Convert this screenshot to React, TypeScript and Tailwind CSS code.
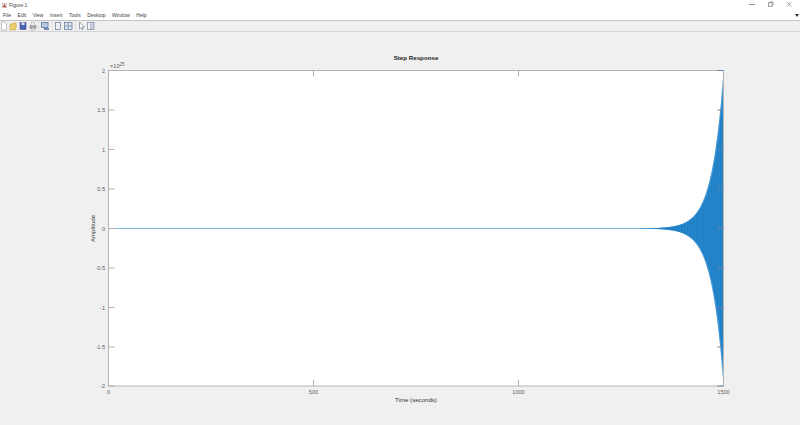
import React from "react";

const font = { fontFamily: '"Liberation Sans", Arial, sans-serif' };
const L = 108.5, R = 723.5, T = 70.5, B = 386, C = 228.5;
const yTicks: [string, number][] = [["2", 70.5], ["1.5", 110], ["1", 149.5], ["0.5", 189], ["0", 228.5], ["-0.5", 268], ["-1", 307.5], ["-1.5", 347], ["-2", 386]];
const xTicks: [string, number][] = [["0", 108.5], ["500", 313.5], ["1000", 518.5], ["1500", 723.5]];
const amp = (x: number) => 157.5 * Math.exp((x - R) * 0.085);

function envelope(k: number) {
  const top: string[] = [];
  const bot: string[] = [];
  for (let x = 640; x <= R; x += 0.5) {
    top.push(`${x},${(C - amp(x) * k).toFixed(2)}`);
    bot.unshift(`${x},${(C + amp(x) * k).toFixed(2)}`);
  }
  return [...top, ...bot].join(" ");
}

function Chart() {
  const streaks: number[] = [];
  for (let x = 670; x <= R; x += 1.5) streaks.push(x);
  return (
    <svg width="800" height="393" viewBox="0 32 800 393" className="block" style={font}>
      <rect x={L} y={T} width={R - L} height={B - T} fill="#ffffff" />
      <line x1={L} x2={660} y1={C} y2={C} stroke="#7fb6de" strokeWidth="1" />
      <polygon points={envelope(1)} fill="#4a9ad6" />
      <polygon points={envelope(0.9)} fill="#2383c9" />
      {streaks.map((x, i) => (
        <line key={x} x1={x} x2={x} y1={C - amp(x) * 0.9} y2={C + amp(x) * 0.9} stroke={i % 2 ? "#3d93d0" : "#1673ba"} strokeWidth="0.6" opacity="0.35" />
      ))}
      <rect x={L} y={T} width={R - L} height={B - T} fill="none" stroke="#b4b4b4" strokeWidth="1" />
      {yTicks.map(([t, y]) => (
        <g key={t}>
          <line x1={L} x2={L + 6} y1={y} y2={y} stroke="#b0b0b0" />
          <line x1={R - 6} x2={R} y1={y} y2={y} stroke="#5f86a6" />
          <text x={L - 3.5} y={y + 2} fontSize="5.6" fill="#5f5f5f" textAnchor="end">{t}</text>
        </g>
      ))}
      {xTicks.map(([t, x]) => (
        <g key={t}>
          <line x1={x} x2={x} y1={B} y2={B - 6} stroke="#b0b0b0" />
          <line x1={x} x2={x} y1={T} y2={T + 6} stroke="#b0b0b0" />
          <text x={x} y={393.5} fontSize="5.6" fill="#5f5f5f" textAnchor="middle">{t}</text>
        </g>
      ))}
      <text x={110} y={67.500} fontSize="5.6" fill="#5f5f5f">×10</text>
      <text x={119.500} y={65.500} fontSize="4.500" fill="#5f5f5f">25</text>
      <text x={416} y={60} fontSize="6.2" fontWeight="700" fill="#222222" textAnchor="middle">Step Response</text>
      <text x={416} y={401.5} fontSize="6.1" fill="#333333" textAnchor="middle">Time (seconds)</text>
      <text transform="translate(95 228.5) rotate(-90)" fontSize="6.1" fill="#333333" textAnchor="middle">Amplitude</text>
    </svg>
  );
}

function ToolIcons() {
  return (
    <svg width="100" height="10" viewBox="0 0 100 10" className="block">
      <path d="M1.500 1h3l2 2v6h-5z" fill="#fff" stroke="#9a9a9a" strokeWidth="0.6" />
      <path d="M10 3h2l1-1h3v2h.5l-1 5H10z" fill="#ebcf70" stroke="#b8983c" strokeWidth="0.5" />
      <rect x="20" y="1.500" width="6" height="7" fill="#4a62ae" stroke="#2f3f80" strokeWidth="0.5" />
      <rect x="21.500" y="1.500" width="3" height="2.500" fill="#dfe5f2" />
      <path d="M30 4.500h6v3h-6z" fill="#ababab" stroke="#7d7d7d" strokeWidth="0.5" />
      <rect x="31.500" y="1.500" width="3" height="3" fill="#f1f1f1" stroke="#999" strokeWidth="0.4" />
      <rect x="31.500" y="7" width="3" height="2.200" fill="#dcdcdc" stroke="#999" strokeWidth="0.4" />
      <path d="M38.500 0v10" stroke="#d8d8d8" strokeWidth="0.6" />
      <rect x="41.500" y="1.500" width="6.500" height="5" fill="#b9cbe3" stroke="#4a6a9c" strokeWidth="0.7" />
      <path d="M44 7h5v2h-5z" fill="#6f8cb3" />
      <path d="M52.500 0v10" stroke="#d8d8d8" strokeWidth="0.6" />
      <rect x="55.500" y="1.500" width="5" height="7" fill="#eef1f6" stroke="#66789a" strokeWidth="0.7" />
      <rect x="64.500" y="1.500" width="7.500" height="7" fill="#dde5f0" stroke="#5c7194" strokeWidth="0.7" />
      <path d="M65 5h7M68.300 2v6.500" stroke="#5c7194" strokeWidth="0.6" />
      <path d="M75.500 0v10" stroke="#d8d8d8" strokeWidth="0.6" />
      <path d="M79.500 1v7l1.700-1.500 1 2.300 1-.5-1-2.200h2.300z" fill="#fff" stroke="#5c7190" strokeWidth="0.6" />
      <rect x="87.500" y="1.500" width="6.500" height="7" fill="#cfd6e0" stroke="#7a8799" strokeWidth="0.7" />
      <rect x="87.500" y="1.500" width="3" height="7" fill="#f4f6f9" stroke="#7a8799" strokeWidth="0.5" />
    </svg>
  );
}

export default function App() {
  const menus = ["File", "Edit", "View", "Insert", "Tools", "Desktop", "Window", "Help"];
  return (
    <div className="w-[800px] h-[425px] overflow-hidden bg-[#f0f0f0] flex flex-col" style={font}>
      <div className="h-[10px] bg-white flex items-center justify-between pl-[2px]">
        <div className="flex items-center gap-[2px] pt-[1px]">
          <svg width="5" height="5" viewBox="0 0 6 6">
            <rect width="6" height="6" fill="#e6e6e6" stroke="#8c8c8c" strokeWidth="0.6" />
            <path d="M1 5 3 1l2 4z" fill="#c2452d" />
          </svg>
          <span className="text-[5px] leading-none text-[#444444]">Figure 1</span>
        </div>
        <svg width="100" height="10" viewBox="0 0 100 10">
          <path d="M49 4.500h6" stroke="#777" strokeWidth="0.8" />
          <rect x="68.500" y="2.800" width="3.500" height="3.500" fill="none" stroke="#777" strokeWidth="0.7" />
          <path d="M70 2.800V1.800h3.200V5H72" fill="none" stroke="#777" strokeWidth="0.6" />
          <path d="M87 2l4.500 4.500M91.500 2 87 6.500" stroke="#777" strokeWidth="0.7" />
        </svg>
      </div>
      <div className="h-[11px] bg-white flex items-center justify-between pl-[3px] pr-[1px] pt-[1px] border-b border-[#c4c4c4]">
        <div className="flex items-center gap-[6.500px] text-[5px] leading-none text-[#444444]">
          {menus.map((m) => (
            <span key={m}>{m}</span>
          ))}
        </div>
        <svg width="4" height="3" viewBox="0 0 4 3">
          <path d="M0 0h4L2 3z" fill="#333" />
        </svg>
      </div>
      <div className="h-[11px] flex items-center border-b border-[#d4d4d4]">
        <ToolIcons />
      </div>
      <Chart />
    </div>
  );
}
